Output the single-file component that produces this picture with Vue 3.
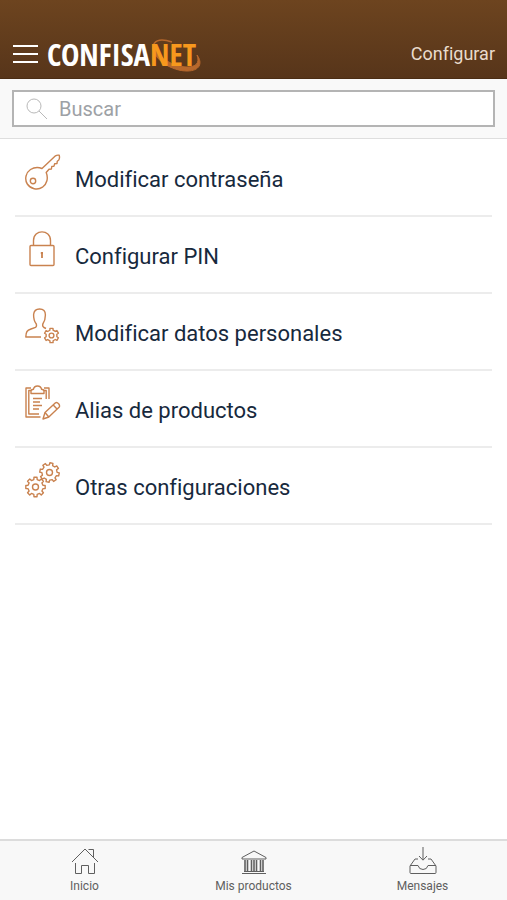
<script setup>
import { ref } from 'vue'

const query = ref('')

const items = [
  { icon: 'key', label: 'Modificar contraseña' },
  { icon: 'lock', label: 'Configurar PIN' },
  { icon: 'user', label: 'Modificar datos personales' },
  { icon: 'clipboard', label: 'Alias de productos' },
  { icon: 'gears', label: 'Otras configuraciones' },
]

const tabs = [
  { icon: 'home', label: 'Inicio' },
  { icon: 'bank', label: 'Mis productos' },
  { icon: 'inbox', label: 'Mensajes' },
]

// Outline of a toothed wheel centred on (cx, cy).
function gear(cx, cy, outer, inner, teeth, turn = 0) {
  const step = (Math.PI * 2) / teeth
  const points = []
  for (let i = 0; i < teeth; i++) {
    const a = i * step + turn
    const corners = [[-0.28, inner], [-0.2, outer], [0.2, outer], [0.28, inner]]
    for (const [offset, r] of corners) {
      const t = a + offset * step
      points.push(`${(cx + r * Math.cos(t)).toFixed(2)} ${(cy + r * Math.sin(t)).toFixed(2)}`)
    }
  }
  return `M${points.join('L')}Z`
}

const smallGear = gear(26.5, 27.5, 7.3, 5.5, 6, 0.52)
const upperGear = gear(24.5, 10.5, 9.8, 7.6, 8, 0.2)
const lowerGear = gear(10.5, 25, 9.8, 7.6, 8, 0)
</script>

<template>
  <div class="screen">
    <header class="topbar">
      <button class="menu" type="button" aria-label="Menú">
        <svg viewBox="0 0 26 20" width="26" height="20">
          <path d="M0 2H25M0 10H25M0 18H25" />
        </svg>
      </button>
      <div class="brand">
        <span>CONFISA</span><span class="net"><svg class="swoosh" viewBox="0 0 52 36" width="52" height="36">
          <path d="M4 14C1 7 5 2 12 2C16 2 19 3 22 4" stroke-width="1.5" />
          <path d="M3 10C4 22 22 33 37 33C50 33 53 25 47 17C50 25 46 29 37 29C23 29 9 20 5 9Z" fill="#b8682c" stroke-width="1" />
        </svg><span class="word">NET</span></span>
      </div>
      <h1 class="title">Configurar</h1>
    </header>

    <form class="search" role="search" @submit.prevent>
      <label class="field">
        <svg viewBox="0 0 22 22" width="22" height="22" aria-hidden="true">
          <circle cx="8" cy="8" r="7" />
          <path d="M13 13L21 21" />
        </svg>
        <input v-model="query" type="text" placeholder="Buscar" aria-label="Buscar" />
      </label>
    </form>

    <main class="list">
      <a v-for="item in items" :key="item.icon" class="row" href="#">
        <svg class="icon" viewBox="0 0 36 36" width="36" height="36" aria-hidden="true">
          <g v-if="item.icon === 'key'">
            <path d="M17 14.5L30.5 1.8Q32 .8 34.2 1.2Q35 4 33.8 6L32.3 7.2L32 9.5L29.6 9.8L29 12.2L26.8 12.4L26.4 15L24 15.3L21.2 18.5C23.5 24 22 30 17.5 33.2C12.5 36.5 5.5 35 2.3 30C-.8 25 1 18.5 5.5 15.5C9 13.3 13.5 13 17 14.5Z" />
            <circle cx="8" cy="27" r="2.7" />
          </g>
          <g v-else-if="item.icon === 'lock'">
            <rect x="5" y="14.5" width="24" height="20" rx="1" />
            <path d="M8.5 14.5V9.5C8.5 -2 25.5 -2 25.5 9.5V14.5" />
            <path d="M17 21.5V27M15.8 22H18" stroke-width="1.8" />
          </g>
          <g v-else-if="item.icon === 'user'">
            <path d="M16 29H.8C1 23.5 2 22.5 6 21L10.5 19.3Q12 18.5 11.3 16C8.5 12.5 8.5 10 8.6 6.5C9 2.5 11 1 14.5 1C18.5 1 20.5 3 20.4 7C20.4 10.5 20 13 17.8 16Q17.2 18.6 19 19.5L21 20.5" />
            <path :d="smallGear" />
            <circle cx="26.5" cy="27.5" r="2.4" />
          </g>
          <g v-else-if="item.icon === 'clipboard'">
            <path d="M6 3H1V32H15.5M19 3H24V14M6 5.5H3.8V29H14M19 5.5H21.2V14" />
            <path d="M6 8.5V6Q6 4.5 8.5 4.2Q9 1 12.5 1Q16 1 16.5 4.2Q19 4.5 19 6V8.5Z" />
            <path d="M8 13.5H17M8 17H15M8 20.5H17M8 24H14" />
            <path d="M18 34L20 27.5L30.5 17.8Q32 17 33.8 19Q35.2 21 34 22.3L23.8 32Z" />
            <path d="M20 27.5L23.8 32M28.2 20L32 24" />
          </g>
          <g v-else>
            <path :d="upperGear" />
            <circle cx="24.5" cy="10.5" r="3" />
            <path :d="lowerGear" />
            <circle cx="10.5" cy="25" r="3" />
          </g>
        </svg>
        <span>{{ item.label }}</span>
      </a>
    </main>

    <nav class="tabs">
      <a v-for="tab in tabs" :key="tab.icon" class="tab" href="#">
        <svg viewBox="0 0 28 28" width="28" height="28" aria-hidden="true">
          <g v-if="tab.icon === 'home'">
            <path d="M1 15L14 2L27 15M17.5 2.5H22.5V10M4.5 16V26.5H10.5V18.5H17.5V26.5H23.5V16" />
          </g>
          <g v-else-if="tab.icon === 'bank'">
            <path d="M2 12V10.5L14 4L26 10.5V12ZM2 26.5H26M4 24.5H24" />
            <path d="M5 13V24M7.5 13V24M11.5 13V24M14 13V24M16.5 13V24M20.5 13V24M23 13V24" stroke-width="1.6" />
          </g>
          <g v-else>
            <path d="M14 0V13M10 9L14 13.2L18 9" />
            <path d="M9 12H6L1 19V25.5Q1 26.5 2 26.5H26Q27 26.5 27 25.5V19L22 12H19M1 18.5H9Q10 22.5 14 22.5Q18 22.5 19 18.5H27" />
          </g>
        </svg>
        <span>{{ tab.label }}</span>
      </a>
    </nav>
  </div>
</template>

<style>
body {
  margin: 0;
  background: #fff;
}
</style>

<style scoped>
.screen {
  display: flex;
  flex-direction: column;
  min-height: 100vh;
  font-family: Roboto, "Liberation Sans", sans-serif;
  font-variant-ligatures: none;
  color: #17293d;
}

a {
  color: inherit;
  text-decoration: none;
}

svg {
  flex: none;
  fill: none;
  stroke: currentColor;
  stroke-linejoin: round;
}

.topbar {
  display: flex;
  align-items: center;
  box-sizing: border-box;
  height: 79px;
  padding: 30px 12px 0 13px;
  background: linear-gradient(#6d441f, #57351a);
  border-bottom: 1px solid #4b2d14;
  color: #fff;
}

.menu {
  display: flex;
  padding: 0;
  border: 0;
  background: none;
  color: #fff;
  stroke-width: 2;
}

.brand {
  display: flex;
  margin-left: 8px;
  font: bold 31px/32px "Open Sans Condensed", "Liberation Sans Narrow", "Open Sans", sans-serif;
}

.net {
  position: relative;
  color: #f7981d;
}

.word {
  position: relative;
}

.swoosh {
  position: absolute;
  top: 0;
  left: 0;
  color: #b8682c;
}

.title {
  margin: 0 0 0 auto;
  font-size: 18px;
  line-height: 24px;
  font-weight: 400;
  color: #eadccd;
}

.search {
  padding: 11px 12px;
  background: #f9f9f9;
  border-bottom: 1px solid #dedede;
}

.field {
  display: flex;
  align-items: center;
  gap: 11px;
  box-sizing: border-box;
  height: 37px;
  padding: 0 12px;
  border: 2px solid #b4b4b4;
  background: #fff;
  color: #b9b9b9;
}

.field input {
  flex: 1;
  min-width: 0;
  padding: 0;
  border: 0;
  outline: 0;
  background: none;
  font: 20px/24px Roboto, "Liberation Sans", sans-serif;
  color: #17293d;
}

.field input::placeholder {
  color: #9da1a5;
  opacity: 1;
}

.list {
  flex: 1;
  padding: 1px 15px 0;
}

.row {
  display: flex;
  align-items: flex-start;
  gap: 14px;
  box-sizing: border-box;
  height: 77px;
  padding: 14px 10px;
  border-bottom: 2px solid #ececec;
  font-size: 22px;
  line-height: 52px;
}

.icon {
  color: #c9824f;
  stroke-width: 1.4;
}

.tabs {
  display: flex;
  height: 59px;
  border-top: 2px solid #dcdcdc;
  background: #f8f8f8;
  color: #5f5f5f;
}

.tab {
  flex: 1;
  display: flex;
  flex-direction: column;
  align-items: center;
  gap: 3px;
  padding-top: 6px;
  font-size: 12px;
  line-height: 16px;
}
</style>
